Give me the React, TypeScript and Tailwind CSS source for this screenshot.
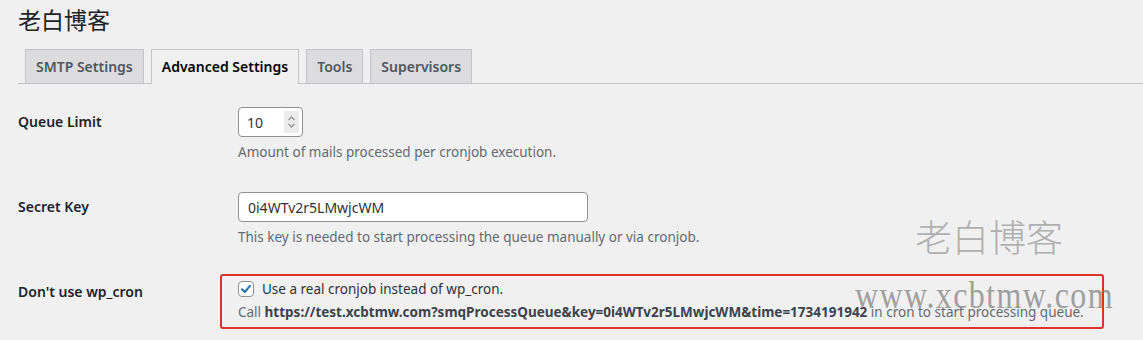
import React from "react";

const font = "font-['Noto_Sans','Noto_Sans_CJK_SC',sans-serif]";

function Tab({ label, active }: { label: string; active?: boolean }) {
  return (
    <div
      className={
        "ml-[7px] border border-b-0 border-[#c3c4c7] px-[10px] pt-[5px] pb-[4px] text-[14px] font-semibold leading-[24px] " +
        (active
          ? "relative -mb-px bg-[#f0f0f1] pb-[5px] text-black"
          : "bg-[#dcdcde] text-[#50575e]")
      }
    >
      {label}
    </div>
  );
}

function NumberInput() {
  return (
    <div className="flex h-[30px] w-[65px] items-center justify-between rounded-[4px] border border-[#8c8f94] bg-white pl-[8px] pr-[3px]">
      <span className="text-[14px] text-[#2c3338]">10</span>
      <div className="flex h-[22px] w-[15px] flex-col items-center justify-center bg-[#ececec]">
        <svg width="9" height="16" viewBox="0 0 9 16" fill="none" stroke="#8a8a8a" strokeWidth="1.1">
          <path d="M1.5 6 L4.5 3 L7.5 6" />
          <path d="M1.5 10 L4.5 13 L7.5 10" />
        </svg>
      </div>
    </div>
  );
}

export default function App() {
  return (
    <div className={"relative min-h-[340px] w-full overflow-hidden bg-[#f0f0f1] " + font}>
      <div className="pl-[18px]">
        <h1 className="pt-[4px] text-[23px] font-normal leading-[32px] text-[#1d2327]">老白博客</h1>
        <div className="mt-[13px] flex items-end border-b border-[#c3c4c7]">
          <Tab label="SMTP Settings" />
          <Tab label="Advanced Settings" active />
          <Tab label="Tools" />
          <Tab label="Supervisors" />
        </div>

        <div className="flex pt-[23px]">
          <div className="w-[220px] pt-[5px] text-[14px] font-semibold leading-[20px] text-[#1d2327]">
            Queue Limit
          </div>
          <div>
            <NumberInput />
            <p className="mt-[5px] text-[13.5px] leading-[20px] text-[#646970]">
              Amount of mails processed per cronjob execution.
            </p>
          </div>
        </div>

        <div className="flex pt-[30px]">
          <div className="w-[220px] pt-[5px] text-[14px] font-semibold leading-[20px] text-[#1d2327]">
            Secret Key
          </div>
          <div>
            <div className="flex h-[30px] w-[350px] items-center rounded-[4px] border border-[#8c8f94] bg-white px-[9px] text-[14px] text-[#2c3338]">
              0i4WTv2r5LMwjcWM
            </div>
            <p className="mt-[5px] text-[13.5px] leading-[20px] text-[#646970]">
              This key is needed to start processing the queue manually or via cronjob.
            </p>
          </div>
        </div>

        <div className="flex pt-[27px]">
          <div className="w-[220px] pt-[8px] text-[14px] font-semibold leading-[20px] text-[#1d2327]">
            Don&apos;t use wp_cron
          </div>
          <div className="-ml-[18px] w-[884px] rounded-[3px] border-2 border-[#e0302b] pb-[5px] pl-[16px] pt-[2px]">
            <label className="flex items-center gap-[8px] text-[13.5px] leading-[22px] text-[#2c3338]">
              <span className="flex h-[16px] w-[16px] items-center justify-center rounded-[4px] border border-[#8c8f94] bg-white">
                <svg width="14" height="14" viewBox="0 0 14 14" fill="none" stroke="#2271b1" strokeWidth="2" strokeLinecap="round" strokeLinejoin="round">
                  <path d="M3 7.2 L5.8 10 L11 3.8" />
                </svg>
              </span>
              Use a real cronjob instead of wp_cron.
            </label>
            <p className="mt-[2px] text-[13.5px] leading-[20px] text-[#646970]">
              Call{" "}
              <b className="font-bold text-[#3c434a]">
                https://test.xcbtmw.com?smqProcessQueue&amp;key=0i4WTv2r5LMwjcWM&amp;time=1734191942
              </b>{" "}
              in cron to start processing queue.
            </p>
          </div>
        </div>
      </div>

      <div className="pointer-events-none absolute left-[915px] top-[218px] text-[37px] font-light leading-none text-[#a0a0a0] opacity-80 font-['Noto_Sans_CJK_SC',sans-serif]">
        老白博客
      </div>
      <div className="pointer-events-none absolute left-[855px] top-[276px] origin-top-left scale-y-[1.2] text-[32px] leading-none tracking-[1.4px] text-[#7d7d7d] opacity-70 font-['Liberation_Serif',serif]">
        www.xcbtmw.com
      </div>
    </div>
  );
}
